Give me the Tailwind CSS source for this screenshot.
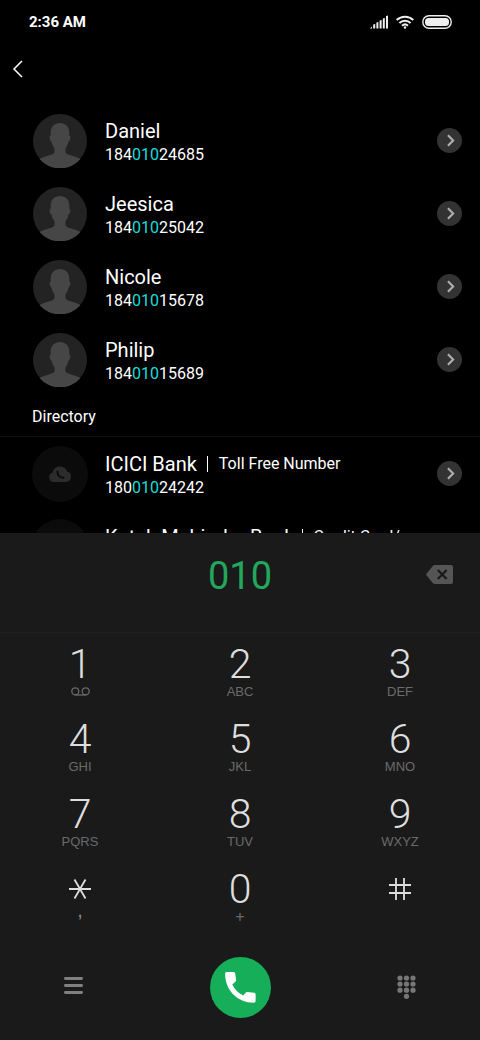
<!DOCTYPE html>
<html lang="en">
<head>
<meta charset="utf-8">
<meta name="viewport" content="width=device-width, initial-scale=1">
<title>Phone</title>
<script src="https://cdn.jsdelivr.net/npm/@tailwindcss/browser@4"></script>
</head>
<body class="bg-black text-white font-['Roboto',sans-serif]">
<svg class="hidden" aria-hidden="true">
  <symbol id="person" viewBox="0 0 54 54">
    <circle cx="27" cy="27" r="27" fill="#232323"/>
    <path fill="#464646" d="M27 9c-5.500 0-9.300 3.600-9.300 9.500v3c-1.700 0-1.200 5.500.8 6 .5 3 1.600 5 3 6.500v4.500C20.500 41 12 42 6.500 45a27 27 0 0 0 41 0C42 42 33.500 41 32.500 38.500V34c1.400-1.500 2.500-3.500 3-6.500 2-.5 2.500-6 .8-6v-3C36.300 12.600 32.500 9 27 9z"/>
  </symbol>
  <symbol id="cloud" viewBox="0 0 56 56">
    <circle cx="28" cy="28" r="28" fill="#0b0b0b"/>
    <path fill="#2c2c2c" d="M21.500 36a4.800 4.800 0 0 1-.8-9.400C21 23 24 20.500 28 20.500c3.400 0 6 1.800 7 4.900A5.400 5.400 0 0 1 34 36z"/>
    <path fill="none" stroke="#0b0b0b" stroke-width="2" stroke-linecap="round" d="M25.500 25.500c0 4 2.500 6.300 6 6.300"/>
  </symbol>
  <symbol id="more" viewBox="0 0 24 24">
    <circle cx="12" cy="12" r="12" fill="#333"/>
    <path fill="none" stroke="#b0b0b0" stroke-width="2" d="M10.500 7l5 5-5 5"/>
  </symbol>
</svg>
<div class="flex h-screen flex-col">
  <header>
    <div class="flex h-11 items-center justify-between px-7">
      <time class="pl-px text-[15px] font-bold">2:36 AM</time>
      <div class="flex items-center gap-2" aria-label="Signal, Wi-Fi and battery">
        <svg class="h-[14px] w-[18px]" viewBox="0 0 18 14" fill="#eee"><path d="M0 13.500L2 11.500v2zM3.200 13.500v-4l2-.5v4.500zM6.400 13.500V7.500l2-.5v6.500zM9.600 13.500V5.500l2-.5v8.500zM12.800 13.500V3.500l2-.5v10.500zM16 13.500V1l2-.5v13z"/></svg>
        <svg class="h-[14px] w-[18px]" viewBox="0 0 18 14" fill="none" stroke="#eee" stroke-width="2"><path d="M.7 5a12 12 0 0 1 16.600 0M3.400 8a8 8 0 0 1 11.200 0M6 10.700a4.500 4.500 0 0 1 6 0"/><circle cx="9" cy="12.500" r="1.200" fill="#eee" stroke="none"/></svg>
        <svg class="h-[14px] w-[30px]" viewBox="0 0 30 14"><rect x=".8" y=".8" width="28.400" height="12.400" rx="6.200" fill="none" stroke="#eee" stroke-width="1.400"/><rect x="3" y="3" width="24" height="8" rx="3.500" fill="#eee"/></svg>
      </div>
    </div>
    <div class="flex h-[60px] px-1.5 pt-[13px]">
      <button class="flex size-6 items-center justify-center" aria-label="Back">
        <svg class="h-[18px] w-[12px]" viewBox="0 0 12 18" fill="none" stroke="#fff" stroke-width="1.500"><path d="M10 1L2 9l8 8"/></svg>
      </button>
    </div>
  </header>

  <main class="min-h-0 flex-1 overflow-hidden">
    <ul>
      <li class="flex h-[73px] items-center pr-[18px] pl-[33px]">
        <svg class="size-[54px]"><use href="#person"/></svg>
        <div class="ml-[18px] flex-1 pt-1 leading-6"><p class="text-xl/6">Daniel</p><p>184<span class="text-[#19dcdc]">010</span>24685</p></div>
        <button aria-label="Details for Daniel"><svg class="size-[25px]"><use href="#more"/></svg></button>
      </li>
      <li class="flex h-[73px] items-center pr-[18px] pl-[33px]">
        <svg class="size-[54px]"><use href="#person"/></svg>
        <div class="ml-[18px] flex-1 pt-1 leading-6"><p class="text-xl/6">Jeesica</p><p>184<span class="text-[#19dcdc]">010</span>25042</p></div>
        <button aria-label="Details for Jeesica"><svg class="size-[25px]"><use href="#more"/></svg></button>
      </li>
      <li class="flex h-[73px] items-center pr-[18px] pl-[33px]">
        <svg class="size-[54px]"><use href="#person"/></svg>
        <div class="ml-[18px] flex-1 pt-1 leading-6"><p class="text-xl/6">Nicole</p><p>184<span class="text-[#19dcdc]">010</span>15678</p></div>
        <button aria-label="Details for Nicole"><svg class="size-[25px]"><use href="#more"/></svg></button>
      </li>
      <li class="flex h-[73px] items-center pr-[18px] pl-[33px]">
        <svg class="size-[54px]"><use href="#person"/></svg>
        <div class="ml-[18px] flex-1 pt-1 leading-6"><p class="text-xl/6">Philip</p><p>184<span class="text-[#19dcdc]">010</span>15689</p></div>
        <button aria-label="Details for Philip"><svg class="size-[25px]"><use href="#more"/></svg></button>
      </li>
    </ul>
    <h2 class="h-[41px] border-b border-[#121212] px-8 pt-[9px] text-base">Directory</h2>
    <ul>
      <li class="flex h-[73px] items-center pr-[18px] pl-8">
        <svg class="size-14"><use href="#cloud"/></svg>
        <div class="ml-[17px] flex-1 pt-1 leading-6">
          <p class="flex items-center text-xl/6">ICICI Bank<span class="ml-[10px] h-4 w-px bg-white"></span><span class="ml-[11px] text-base/6">Toll Free Number</span></p>
          <p>180<span class="text-[#19dcdc]">010</span>24242</p>
        </div>
        <button aria-label="Details for ICICI Bank"><svg class="size-[25px]"><use href="#more"/></svg></button>
      </li>
      <li class="flex h-[73px] items-center pr-[18px] pl-8">
        <svg class="size-14"><use href="#cloud"/></svg>
        <div class="ml-[17px] flex-1 pb-5 leading-6">
          <p class="flex items-center text-xl/6">Kotak Mahindra Bank<span class="ml-[7px] h-4 w-px bg-white"></span><span class="ml-[11px] text-base/6">Credit Card/</span></p>
        </div>
      </li>
    </ul>
  </main>

  <section class="shrink-0 bg-[#1a1a1a]" aria-label="Dialer">
    <div class="grid h-[100px] grid-cols-[1fr_2fr_1fr] border-b border-[#202020] px-[27px]">
      <input class="col-start-2 mt-4 h-[54px] w-full min-w-0 bg-transparent text-center text-[38px] text-[#22a75d] outline-none" type="tel" value="010" aria-label="Phone number">
      <button class="mt-8 h-[19px] justify-self-end" aria-label="Delete digit">
        <svg class="h-[19px] w-[27px]" viewBox="0 0 27 19"><path fill="#555" d="M8.500 0H25a2 2 0 0 1 2 2v15a2 2 0 0 1-2 2H8.500a2 2 0 0 1-1.500-.7L.5 10.300a1.200 1.200 0 0 1 0-1.600L7 .7A2 2 0 0 1 8.500 0z"/><path stroke="#1a1a1a" stroke-width="2.200" d="M11.800 5l8.800 9M20.600 5l-8.800 9"/></svg>
      </button>
    </div>
    <div class="grid auto-rows-[75px] grid-cols-3 pt-[3px] text-[#dedede]">
      <button class="flex flex-col items-center pt-2"><span class="text-[41px]/10 font-light">1</span><svg class="mt-[3px] h-[9px] w-[19px]" viewBox="0 0 19 9" fill="none" stroke="#6a6a6a" stroke-width="1.300" aria-label="Voicemail"><circle cx="4.300" cy="4.300" r="3.500"/><circle cx="14.700" cy="4.300" r="3.500"/><path d="M4.300 8h10.400"/></svg></button>
      <button class="flex flex-col items-center pt-2"><span class="text-[41px]/10 font-light">2</span><span class="font-['Liberation_Sans',sans-serif] text-[13px]/4 text-[#6a6a6a]">ABC</span></button>
      <button class="flex flex-col items-center pt-2"><span class="text-[41px]/10 font-light">3</span><span class="font-['Liberation_Sans',sans-serif] text-[13px]/4 text-[#6a6a6a]">DEF</span></button>
      <button class="flex flex-col items-center pt-2"><span class="text-[41px]/10 font-light">4</span><span class="font-['Liberation_Sans',sans-serif] text-[13px]/4 text-[#6a6a6a]">GHI</span></button>
      <button class="flex flex-col items-center pt-2"><span class="text-[41px]/10 font-light">5</span><span class="font-['Liberation_Sans',sans-serif] text-[13px]/4 text-[#6a6a6a]">JKL</span></button>
      <button class="flex flex-col items-center pt-2"><span class="text-[41px]/10 font-light">6</span><span class="font-['Liberation_Sans',sans-serif] text-[13px]/4 text-[#6a6a6a]">MNO</span></button>
      <button class="flex flex-col items-center pt-2"><span class="text-[41px]/10 font-light">7</span><span class="font-['Liberation_Sans',sans-serif] text-[13px]/4 text-[#6a6a6a]">PQRS</span></button>
      <button class="flex flex-col items-center pt-2"><span class="text-[41px]/10 font-light">8</span><span class="font-['Liberation_Sans',sans-serif] text-[13px]/4 text-[#6a6a6a]">TUV</span></button>
      <button class="flex flex-col items-center pt-2"><span class="text-[41px]/10 font-light">9</span><span class="font-['Liberation_Sans',sans-serif] text-[13px]/4 text-[#6a6a6a]">WXYZ</span></button>
      <button class="flex flex-col items-center pt-[17px]" aria-label="Star"><svg class="size-[22px]" viewBox="0 0 22 22" stroke="#dedede" stroke-width="1.800"><path d="M0 11h22M5.500 1.500l11 19M16.500 1.500l-11 19"/></svg><span class="font-['Liberation_Sans',sans-serif] text-xl/5 text-[#8a8a8a]">,</span></button>
      <button class="flex flex-col items-center pt-2"><span class="text-[41px]/10 font-light">0</span><span class="font-['Liberation_Sans',sans-serif] text-base/4 text-[#6a6a6a]">+</span></button>
      <button class="flex flex-col items-center pt-[17px]" aria-label="Pound"><svg class="size-[22px]" viewBox="0 0 22 22" stroke="#dedede" stroke-width="1.800"><path d="M0 7h22M0 15h22M7 0v22M15 0v22"/></svg></button>
    </div>
    <nav class="flex h-[104px] items-center justify-between px-16 pb-0.5" aria-label="Dialer actions">
      <button class="pb-1" aria-label="Menu"><svg class="h-[17px] w-[19px]" viewBox="0 0 19 17" stroke="#808080" stroke-width="2.800" stroke-linecap="round"><path d="M1.400 1.500h16.200M1.400 8.500h16.200M1.400 15.500h16.200"/></svg></button>
      <button class="flex size-[61px] items-center justify-center rounded-full bg-[#17ae5a]" aria-label="Call"><svg class="size-[31px]" viewBox="0 0 31 31" fill="#fff"><path d="M1.800 0H8.500a1.700 1.700 0 0 1 1.700 1.500l.9 6.500a2 2 0 0 1-.5 1.500L7.300 12.500c2.300 5 6 8.500 11 11l2.500-3a2 2 0 0 1 1.500-.5l6.800.8a1.700 1.700 0 0 1 1.500 1.700V29a1.700 1.700 0 0 1-1.800 1.700C12.500 30.500.2 18.500.1 1.700A1.700 1.700 0 0 1 1.800 0z"/></svg></button>
      <button aria-label="Keypad"><svg class="h-[24px] w-[19px]" viewBox="0 0 19 24" fill="#777"><circle cx="3" cy="3" r="2.600"/><circle cx="9.500" cy="3" r="2.600"/><circle cx="16" cy="3" r="2.600"/><circle cx="3" cy="9" r="2.600"/><circle cx="9.500" cy="9" r="2.600"/><circle cx="16" cy="9" r="2.600"/><circle cx="3" cy="15.200" r="2.600"/><circle cx="9.500" cy="15.200" r="2.600"/><circle cx="16" cy="15.200" r="2.600"/><circle cx="9.500" cy="21.300" r="2.600"/></svg></button>
    </nav>
  </section>
</div>
</body>
</html>
